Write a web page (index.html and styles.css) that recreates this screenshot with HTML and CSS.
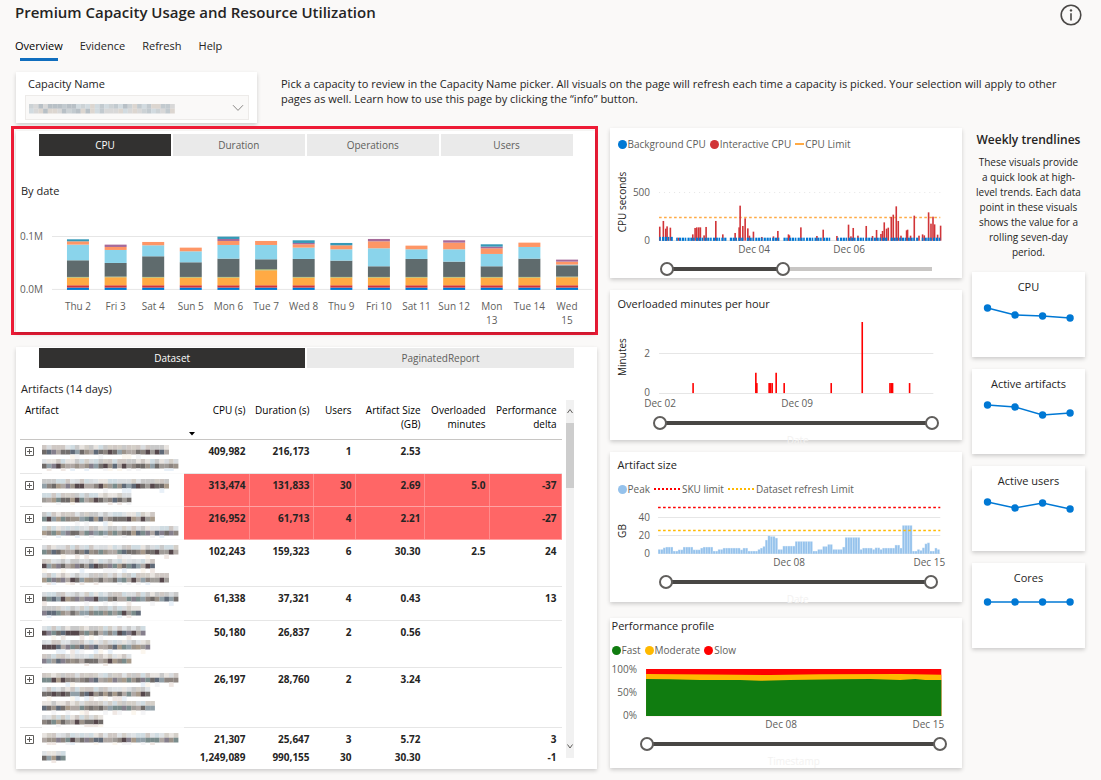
FILE: index.html
```html
<!DOCTYPE html>
<html lang="en">
<head>
<meta charset="utf-8">
<title>Premium Capacity Usage and Resource Utilization</title>
<link rel="stylesheet" href="styles.css">
</head>
<body>
<header class="top">
  <div class="top-row">
    <h1>Premium Capacity Usage and Resource Utilization</h1>
    <button class="info" type="button" aria-label="Info">
      <svg width="22" height="22" viewBox="0 0 22 22"><circle cx="11" cy="11" r="9.8" fill="none" stroke="#4a4846" stroke-width="1.6"/><circle cx="11" cy="6.4" r="1.2" fill="#4a4846"/><path d="M11 9.2V16.4" stroke="#4a4846" stroke-width="1.6"/></svg>
    </button>
  </div>
  <nav class="nav">
    <a class="active" href="#overview">Overview</a>
    <a href="#evidence">Evidence</a>
    <a href="#refresh">Refresh</a>
    <a href="#help">Help</a>
  </nav>
  <div class="picker-row">
    <div class="card picker">
      <label for="capacity">Capacity Name</label>
      <div class="select-wrap">
        <select id="capacity"><option></option></select>
        <svg class="masked masked-value" data-lines="31" data-soft="1"></svg>
        <svg class="chevron" width="12" height="8" viewBox="0 0 12 8"><path d="M1 1.2 6 6.4 11 1.2" fill="none" stroke="#8a8886"/></svg>
      </div>
    </div>
    <p class="intro">Pick a capacity to review in the Capacity Name picker. All visuals on the page will refresh each time a capacity is picked. Your selection will apply to other pages as well. Learn how to use this page by clicking the “info” button.</p>
  </div>
</header>

<main class="board">
  <div class="col-left">
    <section class="highlight">
      <div class="card by-date">
        <div class="tabs">
          <button type="button" class="tab on">CPU</button>
          <button type="button" class="tab">Duration</button>
          <button type="button" class="tab">Operations</button>
          <button type="button" class="tab">Users</button>
        </div>
        <h2>By date</h2>
        <svg id="by-date" class="chart" viewBox="0 0 579 133"></svg>
      </div>
    </section>

    <section class="card artifacts">
      <div class="tabs tabs-low">
        <button type="button" class="tab on">Dataset</button>
        <button type="button" class="tab">PaginatedReport</button>
      </div>
      <h2>Artifacts (14 days)</h2>
      <div class="table-area">
        <table>
          <colgroup><col class="c-toggle"><col><col class="c-cpu"><col class="c-dur"><col class="c-users"><col class="c-size"><col class="c-over"><col class="c-perf"></colgroup>
          <thead>
            <tr>
              <th class="first" colspan="2">Artifact</th>
              <th>CPU (s)<svg class="sort" width="8" height="4" viewBox="0 0 8 4"><path d="M1 0H7L4 3.5Z"/></svg></th>
              <th>Duration (s)</th><th>Users</th><th>Artifact Size (GB)</th><th>Overloaded minutes</th><th>Performance delta</th>
            </tr>
          </thead>
          <tbody id="rows"></tbody>
        </table>
        <div class="scroll">
          <svg width="8" height="23" viewBox="0 0 8 23"><path d="M1.5 13 4 9.5 6.5 13" fill="none" stroke="#605e5c"/></svg>
          <div class="thumb"></div>
          <svg class="down" width="8" height="23" viewBox="0 0 8 23"><path d="M1.5 9.5 4 13 6.5 9.5" fill="none" stroke="#605e5c"/></svg>
        </div>
      </div>
    </section>
  </div>

  <div class="col-mid">
    <section class="card m m-cpu">
      <div class="legend">
        <span><i class="dot" style="background:#0078d4"></i>Background CPU</span>
        <span><i class="dot" style="background:#d13438"></i>Interactive CPU</span>
        <span><i class="dash"></i>CPU Limit</span>
      </div>
      <svg id="cpu" class="chart" viewBox="0 0 352 108"></svg>
      <div class="range r-cpu"><input type="range" value="0" aria-label="CPU start"><input type="range" value="44" aria-label="CPU end"></div>
    </section>
    <section class="card m m-over">
      <h2>Overloaded minutes per hour</h2>
      <svg id="over" class="chart" viewBox="0 0 352 102"></svg>
      <div class="range r-over"><input type="range" value="0" aria-label="Overload start"><input type="range" value="100" aria-label="Overload end"></div>
      <div class="ghost">Date</div>
    </section>
    <section class="card m m-size">
      <h2>Artifact size</h2>
      <div class="legend">
        <span><i class="dot" style="background:#95c2ec"></i>Peak</span>
        <span><i class="dots dots-red"></i>SKU limit</span>
        <span><i class="dots"></i>Dataset refresh Limit</span>
      </div>
      <svg id="size" class="chart" viewBox="0 0 352 77"></svg>
      <div class="range r-size"><input type="range" value="0" aria-label="Size start"><input type="range" value="100" aria-label="Size end"></div>
      <div class="ghost">Date</div>
    </section>
    <section class="card m m-perf">
      <h2>Performance profile</h2>
      <div class="legend">
        <span><i class="dot" style="background:#107c10"></i>Fast</span>
        <span><i class="dot" style="background:#ffb900"></i>Moderate</span>
        <span><i class="dot" style="background:#ff0000"></i>Slow</span>
      </div>
      <svg id="perf" class="chart" viewBox="0 0 352 77"></svg>
      <div class="range r-perf"><input type="range" value="0" aria-label="Profile start"><input type="range" value="100" aria-label="Profile end"></div>
      <div class="ghost">Timestamp</div>
    </section>
  </div>

  <aside class="col-trend">
    <h2>Weekly trendlines</h2>
    <p>These visuals provide a quick look at high-level trends. Each data point in these visuals shows the value for a rolling seven-day period.</p>
    <section class="card t"><h3>CPU</h3><svg class="chart trend" viewBox="0 0 113 52" data-y="14,21,22,24"></svg></section>
    <section class="card t"><h3>Active artifacts</h3><svg class="chart trend" viewBox="0 0 113 52" data-y="14,16,24,22"></svg></section>
    <section class="card t"><h3>Active users</h3><svg class="chart trend" viewBox="0 0 113 52" data-y="14,20,15,21"></svg></section>
    <section class="card t"><h3>Cores</h3><svg class="chart trend" viewBox="0 0 113 52" data-y="17,17,17,17"></svg></section>
  </aside>
</main>
<script src="charts.js"></script>
</body>
</html>
```
FILE: styles.css
```css
* { box-sizing: border-box; }
body {
  margin: 0;
  background: #faf9f8;
  color: #252423;
  font: 10px/14px "Open Sans", "Noto Sans", sans-serif;
}
h1, h2, h3, p { margin: 0; font-weight: 400; }
button { font: inherit; border: 0; padding: 0; cursor: pointer; }
.card { background: #fff; box-shadow: 0 2px 4px rgba(0, 0, 0, .18); }
.chart { display: block; width: 100%; height: auto; }
.chart text { font-size: 10px; fill: #605e5c; }
.chart .dark { fill: #252423; }

.top { padding: 0 16px 0 15px; }
.top-row { display: flex; justify-content: space-between; height: 38px; padding-right: 3px; }
h1 { font-size: 15px; line-height: 24px; font-weight: 600; }
.info { width: 22px; height: 22px; margin-top: 4px; background: none; }
.nav { display: flex; gap: 17px; font-size: 11px; line-height: 16px; height: 34px; }
.nav a { color: #252423; text-decoration: none; }
.nav .active { color: #000; }
.nav .active::after { content: ""; display: block; height: 3px; margin: 4px 5px 0; background: #106ebe; }
.picker-row { display: flex; gap: 24px; padding-left: 1px; height: 56px; align-items: flex-start; }
.picker { width: 241px; height: 51px; padding: 4px 8px 0 9px; flex: none; }
.picker label { display: block; padding-left: 3px; font-size: 11px; line-height: 16px; margin-bottom: 3px; }
.select-wrap { position: relative; }
.select-wrap select { display: block; width: 100%; height: 25px; appearance: none; background: #faf9f8; border: 1px solid #edebe9; border-radius: 0; }
.masked { display: block; }
.masked-value { position: absolute; left: 4px; top: 9px; }
.chevron { position: absolute; right: 5px; top: 9px; }
.intro { font-size: 11px; line-height: 15px; padding-top: 4px; max-width: 780px; }

.board { display: grid; grid-template-columns: 581fr 352fr 113fr; column-gap: 11px; padding: 0 16px 11px; align-items: start; }
.col-left { min-width: 0; margin-right: 1px; }
.highlight { margin: -2px -1px 12px -5px; border: 3px solid #ee1b36; padding: 2px 0 0 2px; }
.by-date { padding-top: 3px; }
.by-date .tabs { margin: 0 22px 27px 23px; }
.by-date h2 { padding-left: 5px; }
h2 { font-size: 11px; line-height: 16px; font-weight: 500; }
.tabs { display: flex; gap: 2px; }
.tab { flex: 1; height: 22px; background: #eaeaea; color: #605e5c; line-height: 22px; }
.tab.on { background: #323130; color: #fff; font-weight: 500; }

.artifacts { padding: 1px 23px 3px 4px; }
.tabs-low { margin: 0 0 13px 19px; }
.tabs-low .tab { height: 20px; line-height: 20px; }
.artifacts h2 { padding-left: 1px; margin-bottom: 3px; }
.table-area { display: flex; gap: 4px; }
table { flex: 1; border-collapse: separate; border-spacing: 0; table-layout: fixed; width: 100%; }
.c-toggle { width: 22px; }
.c-cpu { width: 66px; }
.c-dur { width: 64px; }
.c-users { width: 42px; }
.c-size { width: 69px; }
.c-over { width: 65px; }
.c-perf { width: 72px; }
th, td { padding: 4px 4px 0 0; text-align: right; vertical-align: top; border-bottom: 1px solid #e6e6e6; }
th { height: 40px; padding-top: 3px; font-weight: 500; color: #000; border-color: #c8c6c4; }
th:last-child, td:last-child { padding-right: 5px; }
th.first { text-align: left; padding-left: 5px; }
.sort { display: block; margin: 15px 0 0 4px; }
td { font-weight: 700; }
td.toggle { padding: 7px 0 0 5px; text-align: left; }
td.toggle button { display: block; width: 9px; height: 9px; background: none; }
td.toggle svg { display: block; }
td.name { padding: 5px 0 0; border-color: #fafafa; }
.hot td.num { background: #ff6666; border-color: #ffa3a3; box-shadow: inset -1px 0 #ff8c8c; }
.last td, .total td { border: 0; }
.total td { padding-top: 2px; }
.total td.name { padding-top: 3px; }
.scroll { width: 8px; display: flex; flex-direction: column; background: #f1f1f1; margin-bottom: 8px; }
.scroll .thumb { height: 65px; background: #cdcdcd; }
.scroll .down { margin-top: auto; }

.col-mid { display: flex; flex-direction: column; gap: 12px; margin: 0 -1px 0 1px; }
.m { height: 150px; padding: 6px 0 0; }
.m h2, .m .legend { padding-left: 8px; }
.legend { display: flex; gap: 4px; height: 20px; line-height: 20px; color: #605e5c; }
.legend span { display: flex; align-items: center; gap: 1px; white-space: nowrap; }
.dot { width: 9px; height: 9px; border-radius: 50%; }
.dash { width: 9px; height: 2px; background: #ffaa44; }
.dots { width: 27px; height: 2px; background: repeating-linear-gradient(90deg, #ffb900 0 2px, transparent 2px 4px); }
.dots-red { background: repeating-linear-gradient(90deg, #ff0000 0 2px, transparent 2px 4px); }
.m-over .chart { margin-top: 2px; }
.m-size { padding-top: 5px; }
.m-size .legend { margin-top: 6px; }
.m-size .chart { margin-top: -1px; }
.m-perf { padding-top: 0; margin-top: 4px; }
.m-perf h2, .m-perf .legend { padding-left: 2px; }
.m-perf .legend { margin-top: 6px; }
.ghost { margin-top: 3px; text-align: center; padding-left: 24px; color: #f3f2f1; }
.m-perf .ghost { padding-left: 16px; }

.range { display: grid; height: 14px; background: linear-gradient(#484644, #484644) center / calc(100% - 14px) 4px no-repeat; }
.r-cpu { margin: 0 23px 0 50px; background-image: linear-gradient(90deg, #484644 44%, #c8c6c4 44%); }
.r-over { margin: 0 23px 0 43px; }
.r-size { margin: 0 24px 0 49px; }
.r-perf { margin: 0 15px 0 30px; }
.range input { grid-area: 1 / 1; appearance: none; width: 100%; height: 14px; margin: 0; background: none; pointer-events: none; }
.range input::-webkit-slider-thumb { appearance: none; width: 14px; height: 14px; border: 2px solid #605e5c; border-radius: 50%; background: #fff; pointer-events: auto; }

.col-trend { display: flex; flex-direction: column; gap: 12px; text-align: center; }
.col-trend h2 { font-size: 12px; line-height: 16px; padding-top: 4px; font-weight: 600; white-space: nowrap; }
.col-trend p { line-height: 15px; margin-top: -5px; padding: 0 4px; }
.t { height: 85px; padding-top: 7px; }
.t h3 { font-size: 11px; line-height: 15px; }
```
FILE: charts.js
```js
const rect = (x, y, w, h, fill, extra = '') => `<rect x="${x}" y="${y}" width="${w}" height="${h}" fill="${fill}" ${extra}/>`;
const line = (x1, x2, y, stroke, extra = '') => `<path d="M${x1} ${y}H${x2}" stroke="${stroke}" ${extra}/>`;
const text = (x, y, s, anchor = 'middle') => `<text x="${x}" y="${y}" text-anchor="${anchor}">${s}</text>`;
const vertical = (x, y, s) => `<text class="dark" text-anchor="middle" transform="translate(${x} ${y}) rotate(-90)">${s}</text>`;
const put = (id, html) => { document.getElementById(id).innerHTML = html; };
const GRID = '#e6e6e6';
const DOTTED = 'stroke-width="1.5" stroke-dasharray="2.6 2.4"';

/* Stacked CPU by date, three units per pixel */
const SERIES = ['#0078d4', '#d13438', '#ffaa44', '#9db35b', '#5f6b6d', '#8ad4eb', '#fe9666', '#a66999', '#3599b8'];
const DAYS = [
  ['Thu 2', 7, 7, 23, 2, 50, 47, 10, 0, 6], ['Fri 3', 7, 7, 24, 2, 41, 39, 9, 7, 0],
  ['Sat 4', 7, 7, 23, 2, 62, 33, 10, 0, 0], ['Sun 5', 7, 7, 23, 2, 44, 33, 11, 0, 0],
  ['Mon 6', 7, 7, 23, 2, 55, 41, 12, 6, 7], ['Tue 7', 7, 7, 45, 3, 30, 43, 12, 0, 0],
  ['Wed 8', 7, 7, 23, 2, 54, 34, 10, 4, 8], ['Thu 9', 7, 7, 23, 2, 49, 34, 12, 0, 7],
  ['Fri 10', 7, 7, 23, 2, 32, 54, 21, 7, 0], ['Sat 11', 7, 7, 23, 2, 54, 29, 11, 0, 0],
  ['Sun 12', 7, 7, 23, 2, 46, 37, 20, 7, 0], ['Mon 13', 7, 7, 23, 2, 32, 37, 17, 5, 7],
  ['Tue 14', 7, 7, 23, 2, 55, 35, 13, 0, 0], ['Wed 15', 7, 7, 24, 2, 34, 2, 9, 6, 0]
];
let out = line(36, 577, 37.5, GRID) + line(36, 577, 90.5, GRID) + text(27, 41, '0.1M', 'end') + text(27, 94, '0.0M', 'end');
DAYS.forEach(([name, ...parts], i) => {
  const x = 51 + i * 37.65;
  let y = 91;
  parts.forEach((v, k) => { if (v) { y -= v / 3; out += rect(x.toFixed(1), y.toFixed(2), 22, (v / 3).toFixed(2), SERIES[k]); } });
  const mid = (x + 11).toFixed(1);
  const wrap = name === 'Mon 13' || name === 'Wed 15';
  if (wrap) { const [a, b] = name.split(' '); out += text(mid, 111, a) + text(mid, 125, b); } else out += text(mid, 111, name);
});
put('by-date', out);

/* CPU seconds: position and height of each interactive spike */
const SPIKES = [[179,42],[190,59],[197,36],[201,43],[211,39],[235,9],[278,19],[285,38],[290,40],[296,40],[301,40],[312,16],[318,41],[347,59],[368,19],[405,23],[417,40],[420,105],[428,44],[435,67],[443,37],[448,15],[460,27],[485,11],[520,13],[533,29],[565,19],[568,16],[602,40],[650,14],[669,33],[710,14],[745,48],[752,13],[759,38],[773,15],[798,44],[817,14],[829,32],[842,20],[847,29],[852,55],[859,36],[864,39],[873,71],[879,78],[888,103],[894,59],[902,15],[919,31],[922,33],[931,15],[942,75],[956,15],[967,19],[972,16],[985,85],[992,51],[998,72],[1003,49],[1012,18],[1021,45]];
out = line(49, 330, 38.5, GRID, 'stroke-dasharray="1 4"') + line(49, 330, 86.5, GRID) + line(49, 330, 63.5, '#ffaa44', DOTTED);
SPIKES.forEach(([x, h]) => { out += rect((x / 3 - 10.8).toFixed(1), (86.6 - h / 3).toFixed(1), 1.6, (h / 3).toFixed(1), '#d13438'); });
for (let i = 0; i < 100; i++) {
  if (i % 19 === 5 || i % 31 === 30) continue;
  out += rect((49.2 + i * 2.82).toFixed(1), i < 6 ? 82.8 : 83.6, i % 3 ? 2.2 : 1.6, i < 6 ? 4 : 3.2, '#0078d4');
}
out += text(40, 42, '500', 'end') + text(40, 90, '0', 'end') + text(144, 99, 'Dec 04') + text(239, 99, 'Dec 06') + vertical(16, 48, 'CPU seconds');
put('cpu', out);

/* Overloaded minutes */
const OVER = [[279,30],[467,61],[470,30],[507,30],[511,30],[516,30],[528,61],[552,30],[693,30],[786,213],[869,30],[873,30],[877,30],[928,30]];
out = line(49, 323, 39.5, GRID) + line(49, 323, 79.5, GRID);
OVER.forEach(([x, h]) => { out += rect((x / 3 - 10.8).toFixed(1), (79 - h / 3).toFixed(1), 1.6, (h / 3).toFixed(1), '#ff0000'); });
out += text(40, 43, '2', 'end') + text(40, 82, '0', 'end') + text(50, 93, 'Dec 02') + text(187, 93, 'Dec 09') + vertical(16, 43, 'Minutes');
put('over', out);

/* Artifact size: run lengths of [count, height] */
const RUNS = [[2,13],[1,18],[3,20],[2,8],[2,12],[4,20],[3,12],[1,17],[4,20],[2,8],[2,13],[7,17],[1,12],[2,17],[4,8],[1,13],[1,17],[1,22],[1,41],[1,54],[2,52],[1,47],[2,13],[5,23],[7,37],[2,8],[2,13],[2,22],[2,28],[4,13],[1,20],[6,49],[1,13],[4,17],[1,13],[2,18],[1,13],[5,17],[2,26],[1,17],[4,85],[2,8],[1,13],[1,10],[1,18],[1,30],[1,33],[2,8],[1,17],[1,13]];
out = line(48, 330, 19.5, GRID) + line(48, 330, 37.5, GRID) + line(48, 330, 55.5, GRID);
let n = 0;
RUNS.forEach(([count, h]) => {
  for (let k = 0; k < count; k++, n++) {
    const x = 48 + n * 2.49, y = 55.6 - h / 3;
    out += rect(x.toFixed(2), y.toFixed(1), 2.49, (h / 3).toFixed(1), '#c3ddf4') + rect((x + .4).toFixed(2), (y + .5).toFixed(1), 1.7, (h / 3 - .5).toFixed(1), '#95c2ec');
  }
});
out += line(48, 330, 9.5, '#ff0000', DOTTED) + line(48, 330, 32.5, '#ffb900', DOTTED);
out += text(40, 23, '40', 'end') + text(40, 41, '20', 'end') + text(40, 59, '0', 'end') + text(179, 68, 'Dec 08') + text(319, 68, 'Dec 15') + vertical(16, 33, 'GB');
put('size', out);

/* Performance profile */
out = rect(36, 9, 295, 47, '#ff0000')
  + '<path d="M36 14 100 14.5 160 15 210 14.2 290 14 331 14.8V56H36Z" fill="#ffb900"/>'
  + '<path d="M36 19 60 19.2 90 20 130 20 150 20.8 180 20 230 19.2 260 19 290 20 305 19 315 20 331 20V56H36Z" fill="#107c10"/>'
  + text(27, 13, '100%', 'end') + text(27, 36, '50%', 'end') + text(27, 59, '0%', 'end') + text(171, 68, 'Dec 08') + text(318, 68, 'Dec 15');
put('perf', out);

/* Weekly trendlines */
document.querySelectorAll('.trend').forEach(svg => {
  const pts = svg.dataset.y.split(',').map((y, i) => [15.5 + i * 27.5, +y]);
  svg.innerHTML = `<polyline points="${pts.join(' ')}" fill="none" stroke="#0078d4" stroke-width="1.5"/>` + pts.map(([x, y]) => `<circle cx="${x}" cy="${y}" r="3.7" fill="#0078d4"/>`).join('');
});

/* Artifact table: masked name line lengths, values, row height */
const ROWS = [
  [[27, 29], ['409,982', '216,173', '1', '2.53', '', ''], 34],
  [[27, 19], ['313,474', '131,833', '30', '2.69', '5.0', '-37'], 33, 'hot'],
  [[24, 29], ['216,952', '61,713', '4', '2.21', '', '-27'], 33, 'hot'],
  [[29, 24, 27], ['102,243', '159,323', '6', '30.30', '2.5', '24'], 47],
  [[29, 21], ['61,338', '37,321', '4', '0.43', '', '13'], 34],
  [[22, 23, 19], ['50,180', '26,837', '2', '0.56', '', ''], 47],
  [[29, 23, 24, 13], ['26,197', '28,760', '2', '3.24', '', ''], 60],
  [[29], ['21,307', '25,647', '3', '5.72', '', '3'], 20, 'last'],
  [[5], ['1,249,089', '990,155', '30', '30.30', '', '-1'], 18, 'total']
];
const PLUS = '<button type="button" aria-label="Expand"><svg width="9" height="9" viewBox="0 0 9 9"><path d="M.5.5H8.5V8.5H.5ZM2 4.5H7M4.5 2V7" fill="none" stroke="#605e5c"/></svg></button>';
put('rows', ROWS.map(([lines, vals, h, cls = '']) =>
  `<tr class="${cls}" style="height:${h}px"><td class="toggle">${cls === 'total' ? '' : PLUS}</td><td class="name"><svg class="masked" data-lines="${lines}"></svg></td>${vals.map(v => `<td class="num">${v}</td>`).join('')}</tr>`).join(''));

/* Mosaic blocks that hide private names */
let seed = 7;
const rnd = () => (seed = (seed * 16807) % 2147483647) / 2147483647;
const pick = a => a[Math.floor(rnd() * a.length)];
const DARK = ['#8d8580', '#a09c98', '#6f6a68', '#75706e', '#92a0a8', '#9c938a', '#857f8c', '#7a8c8c', '#56484c', '#a89a8a', '#606a78', '#b0a8a4'];
const MID = ['#c9c9c9', '#d4cfc8', '#dfe3e6', '#d9dcdf', '#cfc8c4', '#d0dce2', '#e8e4e0'];
const PALE = ['#f4f4f6', '#f0e8e4', '#e8f0f8', '#fbf6ee'];
const SOFT = ['#ccd2d5', '#d8d8d8', '#c2cacf', '#dcd6d0', '#b8c0c6', '#d2dbe0'];
document.querySelectorAll('.masked').forEach(svg => {
  const lines = svg.dataset.lines.split(',').map(Number), s = 4.7, soft = svg.dataset.soft;
  const h = soft ? 10 : lines.length * 14 - 2;
  svg.setAttribute('width', 146); svg.setAttribute('height', h); svg.setAttribute('viewBox', `0 0 146 ${h}`);
  svg.innerHTML = lines.map((count, row) => {
    let cells = '';
    for (let i = 0; i < count; i++) {
      const x = (i * s).toFixed(1), y = row * 14;
      cells += rect(x, y, 4.8, 4.8, pick(soft ? SOFT : MID)) + rect(x, y + 4.7, 4.8, 4.8, pick(soft ? SOFT : DARK));
      if (!soft && rnd() < .3) cells += rect(x, y + 9.4, 4.8, 4.5, pick(PALE));
    }
    return cells;
  }).join('');
});
```
